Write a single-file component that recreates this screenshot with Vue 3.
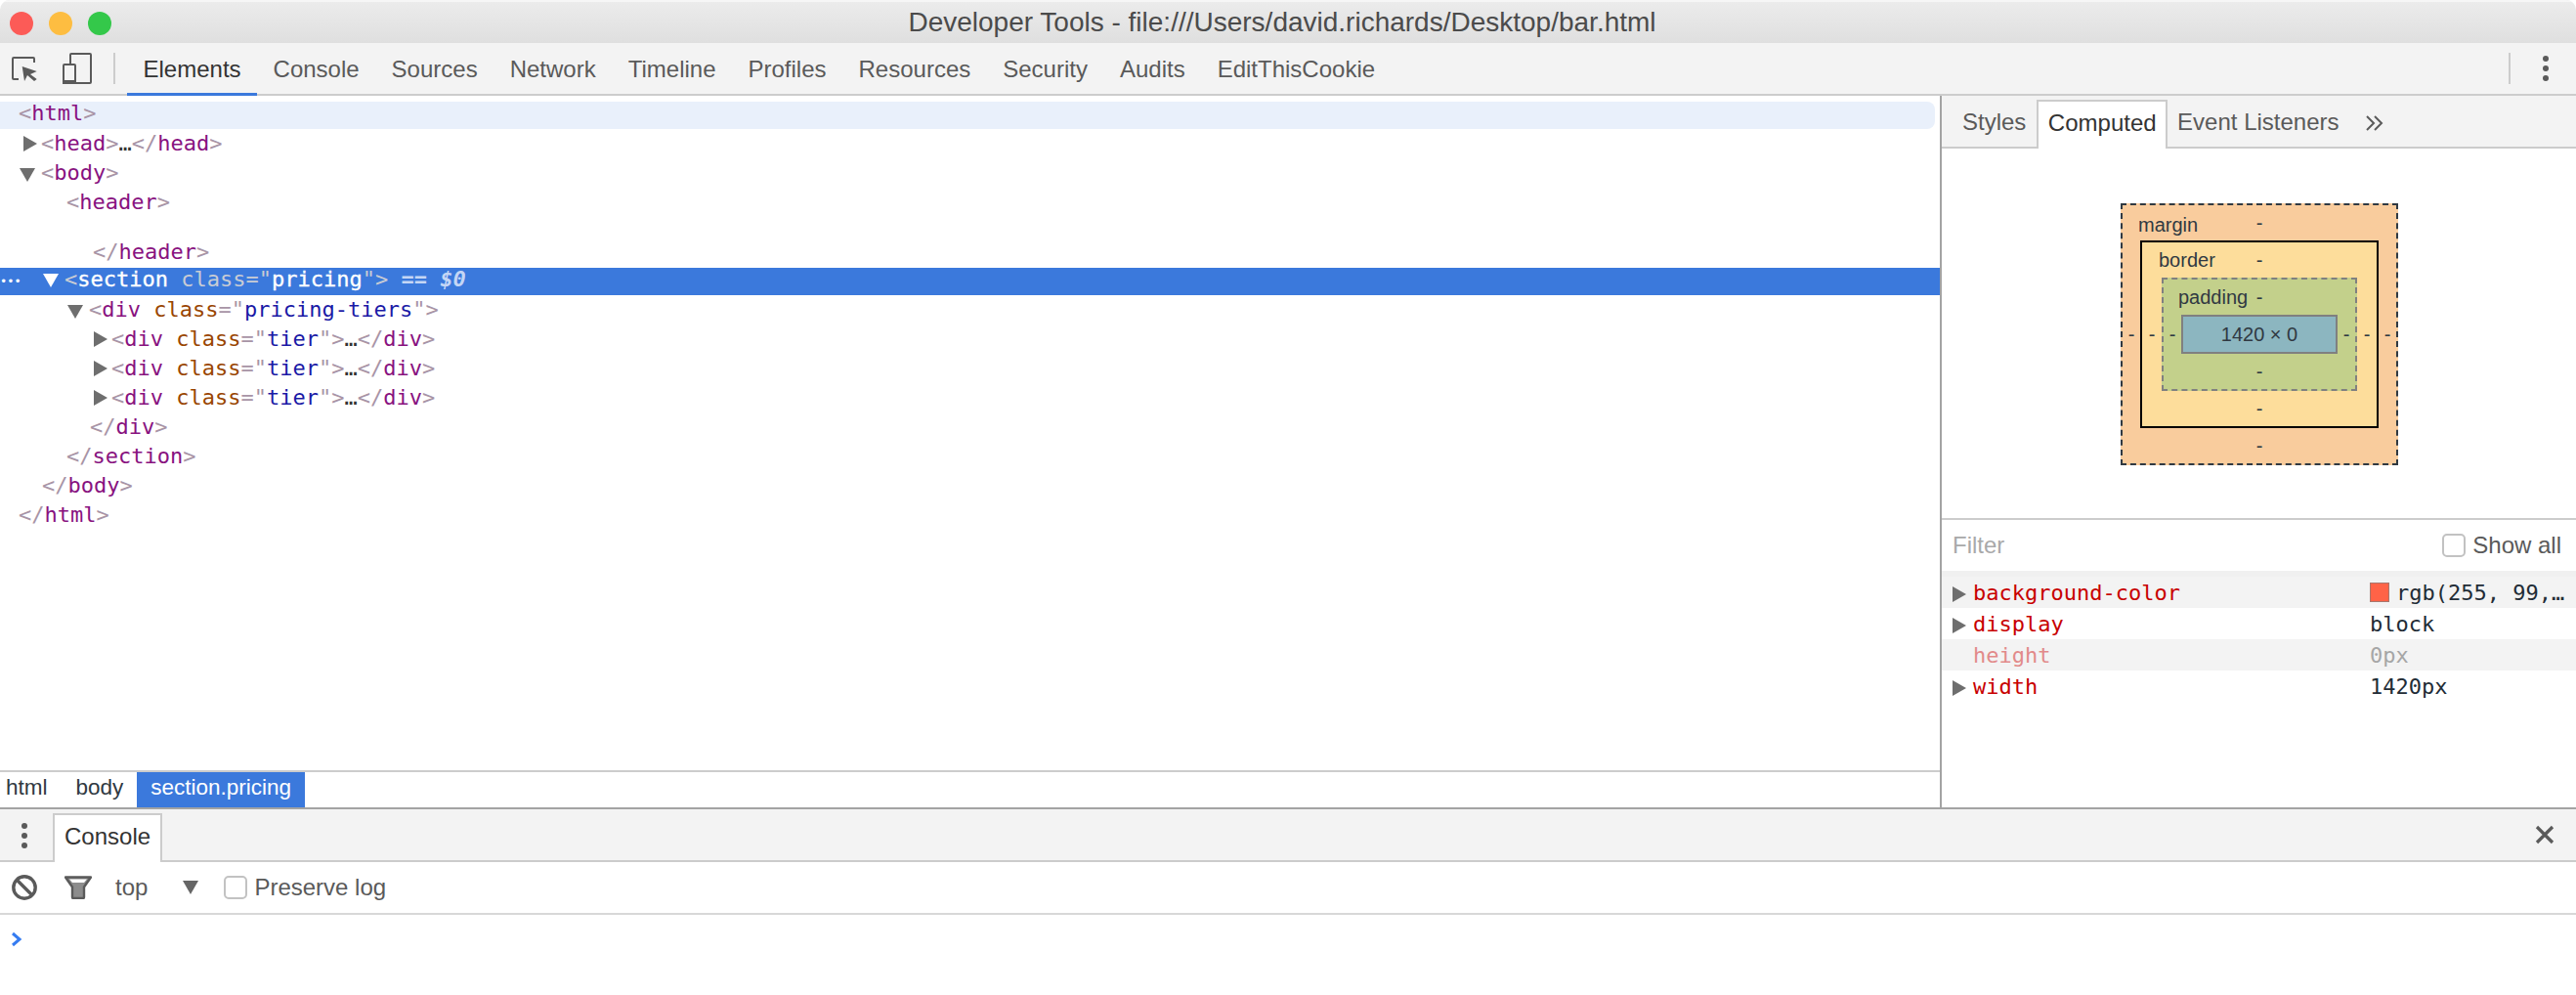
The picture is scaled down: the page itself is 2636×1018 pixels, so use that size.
<script setup>
const tabs = ['Elements','Console','Sources','Network','Timeline','Profiles','Resources','Security','Audits','EditThisCookie']
const tiers = [1,2,3]
const styles = [
  { name: 'background-color', value: 'rgb(255, 99,…', swatch: true, arrow: true, alt: true },
  { name: 'display', value: 'block', arrow: true },
  { name: 'height', value: '0px', faded: true, alt: true },
  { name: 'width', value: '1420px', arrow: true },
]
</script>

<template>
  <div class="win">
    <header class="titlebar">
      <div class="lights"><i class="red"></i><i class="yellow"></i><i class="green"></i></div>
      <div class="title">Developer Tools - file:///Users/david.richards/Desktop/bar.html</div>
    </header>

    <nav class="toolbar">
      <div class="tool-icons">
        <svg width="28" height="28" viewBox="0 0 28 28" class="ic-inspect">
          <path d="M8 25H3a1 1 0 0 1-1-1V4a1 1 0 0 1 1-1h20a1 1 0 0 1 1 1v4" fill="none" stroke="#5a5a5a" stroke-width="2"/>
          <path d="M11.700 12l15 5-6.700 3 6.700 5-2.700 2-7-6-3 6z" fill="#5a5a5a"/>
        </svg>
        <svg width="30" height="32" viewBox="0 0 30 32" class="ic-device">
          <path d="M8 11V2a1 1 0 0 1 1-1h19a1 1 0 0 1 1 1v28a1 1 0 0 1-1 1H13" fill="none" stroke="#5a5a5a" stroke-width="2"/>
          <path d="M2 12h10a1 1 0 0 1 1 1v18H1V13a1 1 0 0 1 1-1z" fill="none" stroke="#5a5a5a" stroke-width="2"/>
          <path d="M1 28h12.500v4H2a2 2 0 0 1-2-2z" fill="#5a5a5a"/>
        </svg>
      </div>
      <span class="vsep"></span>
      <div class="tabs">
        <span v-for="(t, i) in tabs" :key="t" class="tab" :class="{ active: i === 0 }">{{ t }}</span>
      </div>
      <span class="vsep right"></span>
      <span class="dots top-dots"><b></b><b></b><b></b></span>
    </nav>

    <main class="main">
      <section class="elements">
        <div class="tree">
          <div class="row hl"><span class="line l0"><span class="g">&lt;</span><span class="t">html</span><span class="g">&gt;</span></span></div>
          <div class="row"><span class="line l1"><i class="tri-r"></i><span class="g">&lt;</span><span class="t">head</span><span class="g">&gt;</span><span class="ell">…</span><span class="g">&lt;/</span><span class="t">head</span><span class="g">&gt;</span></span></div>
          <div class="row"><span class="line l1"><i class="tri-d"></i><span class="g">&lt;</span><span class="t">body</span><span class="g">&gt;</span></span></div>
          <div class="row"><span class="line l2"><span class="g">&lt;</span><span class="t">header</span><span class="g">&gt;</span></span></div>
          <div class="row close-header"><span class="line l3"><span class="g">&lt;/</span><span class="t">header</span><span class="g">&gt;</span></span></div>
          <div class="row sel">
            <span class="more">•••</span>
            <span class="line l2s"><i class="tri-d white"></i><span class="sg">&lt;</span><span class="st">section</span> <span class="sa">class=</span><span class="sa">"</span><span class="st">pricing</span><span class="sa">"</span><span class="sg">&gt;</span> <span class="sg eq">==</span> <em class="sv">$0</em></span>
          </div>
          <div class="row"><span class="line l3t"><i class="tri-d"></i><span class="g">&lt;</span><span class="t">div</span> <span class="a">class</span><span class="g">="</span><span class="v">pricing-tiers</span><span class="g">"&gt;</span></span></div>
          <div v-for="n in tiers" :key="n" class="row"><span class="line l4t"><i class="tri-r"></i><span class="g">&lt;</span><span class="t">div</span> <span class="a">class</span><span class="g">="</span><span class="v">tier</span><span class="g">"&gt;</span><span class="ell">…</span><span class="g">&lt;/</span><span class="t">div</span><span class="g">&gt;</span></span></div>
          <div class="row"><span class="line l4"><span class="g">&lt;/</span><span class="t">div</span><span class="g">&gt;</span></span></div>
          <div class="row"><span class="line l2b"><span class="g">&lt;/</span><span class="t">section</span><span class="g">&gt;</span></span></div>
          <div class="row"><span class="line l1b"><span class="g">&lt;/</span><span class="t">body</span><span class="g">&gt;</span></span></div>
          <div class="row"><span class="line l0"><span class="g">&lt;/</span><span class="t">html</span><span class="g">&gt;</span></span></div>
        </div>
        <div class="crumbs">
          <span class="crumb">html</span>
          <span class="crumb">body</span>
          <span class="crumb on">section.pricing</span>
        </div>
      </section>

      <aside class="side">
        <div class="side-tabs">
          <span class="stab">Styles</span>
          <span class="stab on">Computed</span>
          <span class="stab">Event Listeners</span>
          <svg class="chev" width="20" height="18" viewBox="0 0 20 18"><path d="M2 2l7 7-7 7M10 2l7 7-7 7" fill="none" stroke="#5a5a5a" stroke-width="2"/></svg>
        </div>
        <div class="metrics">
          <div class="box margin">
            <span class="lbl">margin</span>
            <div class="edge">-</div>
            <div class="mid">
              <div class="side-cell">-</div>
              <div class="box border">
                <span class="lbl">border</span>
                <div class="edge">-</div>
                <div class="mid">
                  <div class="side-cell">-</div>
                  <div class="box padding">
                    <span class="lbl">padding</span>
                    <div class="edge">-</div>
                    <div class="mid">
                      <div class="side-cell">-</div>
                      <div class="content">1420 × 0</div>
                      <div class="side-cell">-</div>
                    </div>
                    <div class="edge">-</div>
                  </div>
                  <div class="side-cell">-</div>
                </div>
                <div class="edge">-</div>
              </div>
              <div class="side-cell">-</div>
            </div>
            <div class="edge">-</div>
          </div>
        </div>
        <div class="filter">
          <span class="ph">Filter</span>
          <label class="check"><i class="cb"></i>Show all</label>
        </div>
        <div class="props">
          <div v-for="s in styles" :key="s.name" class="prop" :class="{ alt: s.alt, faded: s.faded }">
            <span class="pname"><i v-if="s.arrow" class="tri-r"></i>{{ s.name }}</span>
            <span class="pval"><i v-if="s.swatch" class="swatch"></i>{{ s.value }}</span>
          </div>
        </div>
      </aside>
    </main>

    <div class="drawer-bar">
      <span class="dots drawer-dots"><b></b><b></b><b></b></span>
      <span class="dtab">Console</span>
      <svg class="close" width="22" height="22" viewBox="0 0 22 22"><path d="M3 3l16 16M19 3L3 19" stroke="#5a5a5a" stroke-width="3.200" fill="none"/></svg>
    </div>
    <div class="console-tools">
      <svg width="26" height="26" viewBox="0 0 26 26" class="ic-clear"><circle cx="13" cy="13" r="11.200" fill="none" stroke="#5a5a5a" stroke-width="3.400"/><path d="M5.500 5.500l15 15" stroke="#5a5a5a" stroke-width="3.400"/></svg>
      <svg width="28" height="24" viewBox="0 0 28 24" class="ic-filter"><path d="M1 1.500h26L20 11.500V22a1 1 0 0 1-1 1H9a1 1 0 0 1-1-1V11.500z" fill="#8c8c8c" stroke="#5a5a5a" stroke-width="2.400" stroke-linejoin="round"/><path d="M5 3.500h18L20 7H8z" fill="#fff"/></svg>
      <span class="top">top</span>
      <i class="sel-arrow"></i>
      <label class="check preserve"><i class="cb"></i>Preserve log</label>
    </div>
    <div class="prompt">
      <svg width="12" height="16" viewBox="0 0 12 16"><path d="M2 2l7 6-7 6" fill="none" stroke="#367cf1" stroke-width="3"/></svg>
    </div>
  </div>
</template>

<style>
html, body { margin: 0; background: #fff; }
</style>

<style scoped>
.win { width: 2636px; height: 1018px; overflow: hidden; display: flex; flex-direction: column; font-family: "Liberation Sans", Arial, sans-serif; font-size: 24px; color: #303942; background: #fff; border-radius: 10px 10px 0 0; }
.titlebar { height: 44px; flex: none; position: relative; display: flex; align-items: center; justify-content: center; background: linear-gradient(#ececec, #dfdfdf); box-shadow: inset 0 2px 0 #f6f6f6; }
.lights { position: absolute; left: 10px; top: 12px; display: flex; gap: 16px; }
.lights i { width: 24px; height: 24px; border-radius: 50%; display: block; }
.red { background: #fc5b57; }
.yellow { background: #fdbd41; }
.green { background: #34c84a; }
.title { font-size: 28px; color: #4b4b4b; margin-right: 12px; padding-top: 2px; }

.toolbar { height: 52px; flex: none; display: flex; align-items: center; background: #f3f3f3; border-bottom: 2px solid #ccc; box-sizing: content-box; }
.tool-icons { display: flex; align-items: center; width: 116px; flex: none; }
.ic-inspect { margin-left: 11px; }
.ic-device { margin-left: 25px; }
.vsep { width: 2px; height: 32px; background: #ccc; flex: none; }
.vsep.right { margin-left: auto; }
.tabs { display: flex; margin-left: 12px; height: 100%; }
.tab { padding: 0 16.500px; height: 54px; box-sizing: border-box; line-height: 53px; color: #5a5a5a; white-space: nowrap; }
.tab.active { color: #333; border-bottom: 3px solid #3b79dc; }
.dots { display: flex; flex-direction: column; gap: 4px; }
.dots b { width: 6px; height: 6px; border-radius: 50%; background: #5a5a5a; display: block; }
.top-dots { margin-left: 33px; margin-right: 28px; }

.main { height: 730px; flex: none; display: flex; box-sizing: border-box; border-bottom: 2px solid #a3a3a3; }
.elements { width: 1985px; flex: none; display: flex; flex-direction: column; border-right: 2px solid #a3a3a3; }
.tree { flex: 1; padding-top: 6px; font-family: "DejaVu Sans Mono", monospace; font-size: 22px; }
.row { height: 30px; line-height: 30px; white-space: pre; position: relative; }
.row.hl { height: 28px; line-height: 24px; margin-right: 5px; background: #e9f0fb; border-radius: 0 8px 8px 0; }
.close-header { margin-top: 24px; height: 28px; line-height: 24px; }
.row.sel { height: 28px; line-height: 24px; background: #3b79dc; }
.line { position: relative; display: inline-block; }
.l0 { margin-left: 19px; }
.l1 { margin-left: 42px; }
.l1b { margin-left: 43px; }
.l2 { margin-left: 68px; }
.l2b { margin-left: 68px; }
.l2s { margin-left: 66px; }
.l3 { margin-left: 95px; }
.l3t { margin-left: 91px; }
.l4 { margin-left: 92px; }
.l4t { margin-left: 114px; }
.g { color: #a894a6; }
.t { color: #881280; }
.a { color: #994500; }
.v { color: #1a1aa6; }
.ell { color: #333; }
.sg { color: #c9ccd4; }
.sa { color: #c9ccd4; }
.st { color: #fff; -webkit-text-stroke: 0.3px #fff; }
.sv { color: #c4d6f5; font-weight: bold; }
.eq { color: #c4d6f5; font-weight: bold; }
.more { position: absolute; left: 0; top: 0; color: #fff; font-size: 12px; line-height: 28px; }
i.tri-r, i.tri-d { display: inline-block; position: absolute; width: 0; height: 0; }
.line > i.tri-r { left: -18px; top: 7px; }
.line > i.tri-d { left: -22px; top: 10px; }
.tri-r { border-left: 14px solid #6e6e6e; border-top: 8px solid transparent; border-bottom: 8px solid transparent; }
.tri-d { border-top: 14px solid #6e6e6e; border-left: 8px solid transparent; border-right: 8px solid transparent; }
.tri-d.white { border-top-color: #fff; }
.row.sel .line > i.tri-d { top: 6px; }

.crumbs { height: 36px; border-top: 2px solid #ccc; display: flex; font-size: 22.500px; flex: none; }
.crumb { padding: 0 14px 0 6px; margin-right: 15px; line-height: 32px; }
.crumb + .crumb { padding: 0; margin-right: 14px; }
.crumb.on { background: #3b79dc; color: #fff; padding: 0 14px; margin: 0; }

.side { flex: 1; display: flex; flex-direction: column; min-width: 0; }
.side-tabs { height: 52px; flex: none; display: flex; align-items: flex-end; background: #f3f3f3; border-bottom: 2px solid #ccc; padding-left: 21px; }
.stab { height: 48px; line-height: 46px; color: #5a5a5a; margin-right: 12px; white-space: nowrap; }
.stab.on { box-sizing: border-box; height: 50px; margin-bottom: -2px; margin-right: 10px; margin-left: -1px; padding: 0 9.500px; background: #fff; color: #333; border: 2px solid #ccc; border-bottom: 0; line-height: 44px; }
.chev { margin: 0 0 15px 14px; }

.metrics { height: 380px; flex: none; padding-top: 56px; box-sizing: border-box; padding-left: 183px; border-bottom: 2px solid #ccc; font-size: 20px; color: #303942; }
.box { position: relative; box-sizing: border-box; display: flex; flex-direction: column; }
.lbl { position: absolute; line-height: 36px; top: 0; }
.margin { width: 284px; height: 268px; background: #f9cc9d; border: 2px dashed #303942; }
.margin > .lbl { left: 16px; top: 2px; }
.border { width: 244px; height: 192px; background: #fddd9b; border: 2px solid #000; }
.border > .lbl { left: 17px; }
.padding { width: 200px; height: 116px; background: #c3d08b; border: 2px dashed #808080; }
.padding > .lbl { left: 15px; }
.edge { height: 36px; line-height: 36px; text-align: center; flex: none; }
.mid { display: flex; flex: 1; min-height: 0; }
.side-cell { flex: 1; display: flex; align-items: center; justify-content: center; }
.content { width: 160px; height: 40px; box-sizing: border-box; background: #8cb6c0; border: 2px solid #808080; display: flex; align-items: center; justify-content: center; flex: none; }

.filter { height: 52px; flex: none; display: flex; align-items: center; justify-content: space-between; padding: 0 15px 0 11px; border-bottom: 6px solid #f0f0f0; }
.ph { color: #a9a9a9; }
.check { display: flex; align-items: center; color: #5a5a5a; }
.cb { width: 24px; height: 24px; box-sizing: border-box; border: 2px solid #c2c2c2; border-radius: 5px; background: #fff; display: block; margin-right: 7px; flex: none; }
.props { font-family: "DejaVu Sans Mono", monospace; font-size: 22px; }
.prop { height: 32px; display: flex; align-items: center; white-space: pre; }
.prop.alt { background: #f3f3f3; }
.pname { width: 438px; flex: none; padding-left: 32px; box-sizing: border-box; color: #c80000; position: relative; }
.pname .tri-r { left: 11px; top: 6px; }
.pval { color: #222c36; display: flex; align-items: center; }
.faded .pname { color: #e28a8a; }
.faded .pval { color: #a6a6a6; }
.swatch { width: 20px; height: 20px; box-sizing: border-box; background: #ff6347; border: 1px solid #a8776e; margin-right: 7px; display: block; }

.drawer-bar { height: 52px; flex: none; display: flex; align-items: flex-end; background: #f3f3f3; border-bottom: 2px solid #ccc; position: relative; }
.drawer-dots { position: absolute; left: 22px; top: 14px; }
.dtab { margin-left: 54px; margin-bottom: -2px; height: 50px; box-sizing: border-box; padding: 0 10px; background: #fff; color: #333; border: 2px solid #ccc; border-bottom: 0; line-height: 44px; }
.close { position: absolute; right: 21px; top: 15px; }
.console-tools { height: 52px; flex: none; display: flex; align-items: center; border-bottom: 2px solid #d8d8d8; color: #5a5a5a; }
.ic-clear { margin-left: 12px; flex: none; }
.ic-filter { margin-left: 28px; flex: none; }
.top { margin-left: 24px; }
.sel-arrow { margin-left: 36px; width: 0; height: 0; border-top: 14px solid #666; border-left: 8px solid transparent; border-right: 8px solid transparent; }
.preserve { margin-left: 26px; }
.prompt { padding: 17px 0 0 11px; line-height: 0; }
</style>
